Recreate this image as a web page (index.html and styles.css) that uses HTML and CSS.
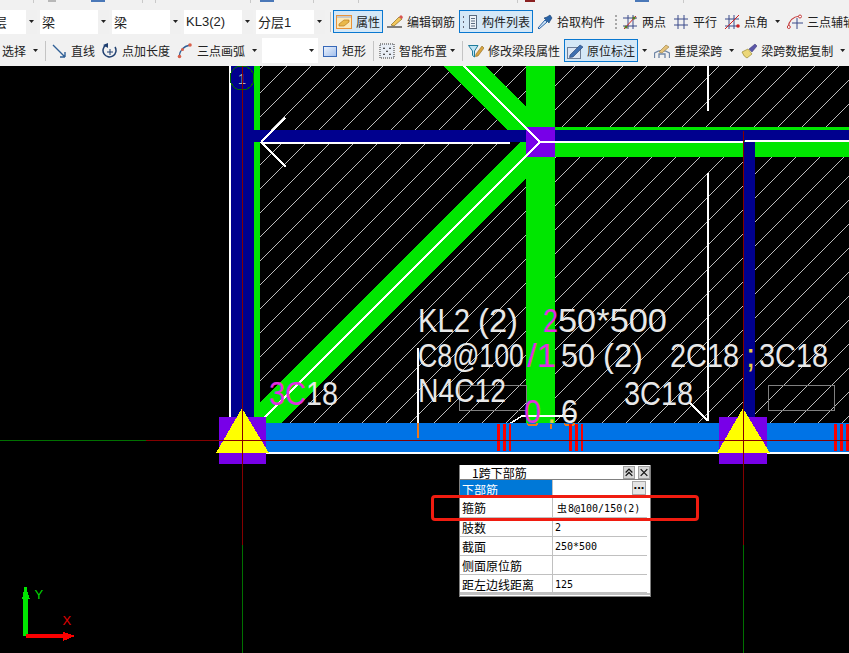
FILE: index.html
```html
<!DOCTYPE html>
<html lang="zh-CN">
<head>
<meta charset="utf-8">
<title>梁 原位标注</title>
<link rel="stylesheet" href="styles.css">
</head>
<body>
<div class="app">
  <header class="toolbar">
    <div class="row row-cut">
      <i class="bit sep-bit b33"></i><i class="bit gray-bit b14"></i><i class="bit blue-bit b35"></i><i class="bit sep-bit b37"></i><i class="bit sep-bit b12"></i><i class="bit sep-bit b94"></i><i class="bit blue-bit b9"></i><i class="bit sep-bit b39"></i><i class="bit sep-bit b44"></i><i class="bit sep-bit b158"></i><i class="bit red-bit b7"></i><i class="bit blue-bit b100"></i><i class="bit sep-bit b34"></i>
    </div>
    <div class="row row-a">
      <div class="combo combo-first"><span class="combo-text clip-left">层</span><span class="combo-arrow"><b class="caret"></b></span></div>
      <div class="combo"><span class="combo-text">梁</span><span class="combo-arrow"><b class="caret"></b></span></div>
      <div class="combo"><span class="combo-text">梁</span><span class="combo-arrow"><b class="caret"></b></span></div>
      <div class="combo"><span class="combo-text">KL3(2)</span><span class="combo-arrow"><b class="caret"></b></span></div>
      <div class="combo"><span class="combo-text">分层1</span><span class="combo-arrow"><b class="caret"></b></span></div>
      <span class="sep m2"></span>
      <div class="tool active m2">
        <svg class="ico" viewBox="0 0 16 16"><rect x="0.5" y="1.5" width="15" height="13" fill="#fde9b8" stroke="#e8923a"/><rect x="1" y="2" width="14" height="2" fill="#c9c9c9"/><path d="M3 10 L8 6 L13 6 L13 8 L8 12 L3 12 Z" fill="#e9b84a" stroke="#b97a1c" stroke-width="0.7"/></svg>
        <span>属性</span>
      </div>
      <div class="tool m4">
        <svg class="ico" viewBox="0 0 16 16"><path d="M0 13 H15" stroke="#333" stroke-width="1.2"/><path d="M4 11 L12 3 L15 5 L7 12 Z" fill="#f2c75c" stroke="#8a6a20" stroke-width="0.7"/><path d="M12 3 L14 1 L16 3 L15 5 Z" fill="#d9534f"/></svg>
        <span>编辑钢筋</span>
      </div>
      <div class="tool active m4">
        <svg class="ico" viewBox="0 0 16 16"><path d="M1 3 H3 M1 8 H3 M1 13 H3" stroke="#667" stroke-width="2" stroke-dasharray="1 1"/><rect x="7.5" y="1.5" width="7" height="13" fill="#eef3f8" stroke="#5a6b80"/><path d="M9 4.5 H13 M9 7 H13 M9 9.5 H13 M9 12 H13" stroke="#5a6b80"/></svg>
        <span>构件列表</span>
      </div>
      <div class="tool m4">
        <svg class="ico" viewBox="0 0 16 16"><path d="M2 15 L1 14 L8 6 L10 8 Z" fill="#cfe4f7" stroke="#2a64a8"/><path d="M7 4 L12 9 L13 7 L15 4 L13 1 L10 3 Z" fill="#2a64a8" stroke="#173c6b" stroke-width="0.6"/></svg>
        <span>拾取构件</span>
      </div>
      <span class="grip m10"></span>
      <div class="tool m5">
        <svg class="ico" viewBox="0 0 16 16"><path d="M1 4 H15 M1 12 H15 M6 1 V15 M11 1 V15" stroke="#3a4a8a"/><path d="M2 15 L14 2" stroke="#d02020"/><circle cx="4" cy="13" r="1.6" fill="#5a7a20"/><circle cx="12" cy="4" r="1.6" fill="#5a7a20"/></svg>
        <span>两点</span>
      </div>
      <div class="tool m7">
        <svg class="ico" viewBox="0 0 16 16"><path d="M1 5 H15 M1 11 H15 M5 1 V15 M11 1 V15" stroke="#3a4a8a"/></svg>
        <span>平行</span>
      </div>
      <div class="tool m7">
        <svg class="ico" viewBox="0 0 16 16"><path d="M1 5 H15 M1 12 H15 M5 1 V15 M10 1 V15" stroke="#3a4a8a"/><path d="M1 15 L15 1" stroke="#d02020"/><circle cx="14" cy="12" r="1.8" fill="#d02020"/></svg>
        <span>点角</span>
      </div>
      <b class="caret m7"></b>
      <div class="tool m7">
        <svg class="ico" viewBox="0 0 16 16"><path d="M1 14 Q2 3 13 2" fill="none" stroke="#c43c3c" stroke-width="1.2"/><path d="M5 9 H16 M10 4 V15" stroke="#3a4a8a"/><circle cx="13" cy="2.500" r="1.500" fill="#fff" stroke="#c43c3c"/><circle cx="1.800" cy="13" r="1.500" fill="#fff" stroke="#c43c3c"/></svg>
        <span>三点辅轴</span>
      </div>
    </div>
    <div class="row row-b">
      <span class="lead">选择</span>
      <b class="caret m7"></b>
      <span class="sep m7"></span>
      <div class="tool m5">
        <svg class="ico" viewBox="0 0 16 16"><path d="M2 2 L14 14 M14 14 V9 M14 14 H9" fill="none" stroke="#2f5f96" stroke-width="1.400"/></svg>
        <span>直线</span>
      </div>
      <div class="tool m7">
        <svg class="ico" viewBox="0 0 16 16"><path d="M4 2 A6.500 6.500 0 1 0 13 4" fill="none" stroke="#1f3f70" stroke-width="1.500"/><path d="M1 2 L6 0 L6 5 Z" fill="#1f3f70"/><path d="M8 6 V12 M5 9 H11" stroke="#1f3f70"/></svg>
        <span>点加长度</span>
      </div>
      <div class="tool m7">
        <svg class="ico" viewBox="0 0 16 16"><path d="M2 14 Q3 4 13 2" fill="none" stroke="#2f5f96" stroke-width="1.300"/><circle cx="2.500" cy="13.500" r="1.800" fill="#d9604a"/><circle cx="5.500" cy="6.500" r="1.500" fill="#d9604a"/><circle cx="13" cy="2" r="1.800" fill="#d9604a"/></svg>
        <span>三点画弧</span>
      </div>
      <b class="caret m7"></b>
      <div class="combo combo-blank m5"><span class="combo-text"></span><b class="caret"></b></div>
      <div class="tool m4">
        <svg class="ico" viewBox="0 0 16 16"><defs><linearGradient id="rectFill" x1="0" y1="0" x2="1" y2="1"><stop offset="0" stop-color="#eef4fd"/><stop offset="1" stop-color="#9fbdeb"/></linearGradient></defs><rect x="1.500" y="3.500" width="13" height="10" fill="url(#rectFill)" stroke="#3768b8"/></svg>
        <span>矩形</span>
      </div>
      <span class="sep m7"></span>
      <div class="tool m5">
        <svg class="ico" viewBox="0 0 16 16"><rect x="1" y="1" width="14" height="14" fill="#e8eef6" stroke="#333" stroke-dasharray="1 1"/><path d="M5 4 L6 6 L4 6 Z M11 4 L12 6 L10 6 Z M8 7 L9 9 L7 9 Z M5 10 L6 12 L4 12 Z M11 10 L12 12 L10 12 Z" fill="#222"/></svg>
        <span>智能布置</span>
      </div>
      <b class="caret m3"></b>
      <span class="sep m7"></span>
      <div class="tool m5">
        <svg class="ico" viewBox="0 0 16 16"><path d="M0.500 2.500 H10 L6.500 8 V14 L4.500 12.500 V8 Z" fill="#bfe3f2" stroke="#1f7c9c"/><path d="M8 11 L14 3 L16 5 L10 13 L7.500 13.500 Z" fill="#d9a441" stroke="#8a6a20" stroke-width="0.600"/></svg>
        <span>修改梁段属性</span>
      </div>
      <div class="tool active m4">
        <svg class="ico" viewBox="0 0 16 16"><rect x="0.500" y="4.500" width="13" height="11" fill="#dce6f3" stroke="#6f7f98"/><path d="M3 12 L13 2 L16 4 L6 14 L2.500 14.500 Z" fill="#3f6fb0" stroke="#233f70" stroke-width="0.600"/></svg>
        <span>原位标注</span>
      </div>
      <b class="caret m4"></b>
      <div class="tool m7">
        <svg class="ico" viewBox="0 0 16 16"><path d="M0.500 15 V10 Q8 5 15.500 10 V15 M5 15 V11 H11 V15" fill="none" stroke="#6f86a6" stroke-width="1.300"/><path d="M5 9 L12 2 L15 4 L8 10 Z" fill="#e5c27a" stroke="#96793a" stroke-width="0.600"/></svg>
        <span>重提梁跨</span>
      </div>
      <b class="caret m7"></b>
      <div class="tool m7">
        <svg class="ico" viewBox="0 0 16 16"><path d="M1 9 L7 6 L11 11 L6 15 Q3 14 1 9 Z" fill="#ecd778" stroke="#9a8a35" stroke-width="0.700"/><path d="M8 6 L14 1 L16 3 L11 9 Z" fill="#5a56a8" stroke="#36336e" stroke-width="0.500"/></svg>
        <span>梁跨数据复制</span>
      </div>
      <b class="caret m7"></b>
    </div>
  </header>

  <main class="canvas">
    <svg class="drawing" viewBox="0 66 849 587" width="849" height="587">
      <defs>
        <pattern id="hatch" patternUnits="userSpaceOnUse" x="0" y="0" width="24" height="24">
          <path d="M0 17 L17 0 M17 24 L24 17" stroke="#bcbcbc" stroke-width="1" fill="none"/>
        </pattern>
      </defs>

      <rect class="hatch" x="260" y="66" width="589" height="358"/>

      <rect class="c-green" x="254" y="66" width="6" height="358"/>
      <polygon class="c-green" points="444,66 485,66 526,107 526,132 507,130"/>
      <polygon class="c-green" points="526,136 520,142 260,402 254,402 254,423 281,423 526,178"/>
      <rect class="c-green" x="526" y="66" width="29" height="358"/>
      <rect class="c-green" x="555" y="127" width="294" height="30"/>

      <rect class="c-navy" x="231" y="66" width="23" height="352"/>
      <rect class="c-navy" x="254" y="130" width="272" height="12"/>
      <rect class="c-navy" x="555" y="130" width="294" height="11"/>
      <rect class="c-navy" x="743" y="142" width="12" height="276"/>
      <rect class="c-purple" x="526" y="127" width="29" height="30"/>
      <rect class="c-white" x="229" y="66" width="2" height="388"/>

      <circle class="axis-ring" cx="242" cy="78" r="12"/>
      <text class="axis-no" x="242" y="84">1</text>

      <g class="wire">
        <path d="M464 66 L540 142 L255 427"/>
        <path d="M261 142 L285 118 M261 142 L286 167"/>
        <path d="M690 403 L708 421"/>
        <path d="M506 426 L522 416 H575"/>
      </g>
      <g class="wire-thick">
        <path d="M261 142.500 H510"/>
        <path d="M540 141.500 H743 M745 140.500 H849"/>
        <path d="M708 66 V111 M708 173 V421"/>
        <path d="M418 348 V423"/>
      </g>

      <rect class="frame" x="459.500" y="385.500" width="67" height="25"/>
      <rect class="frame" x="768.500" y="385.500" width="66" height="25"/>

      <g class="cad">
        <text x="418" y="332" textLength="52" lengthAdjust="spacingAndGlyphs">KL2</text>
        <text x="478" y="332" textLength="40" lengthAdjust="spacingAndGlyphs">(2)</text>
        <text class="pink" x="543" y="332" textLength="15" lengthAdjust="spacingAndGlyphs">2</text>
        <text x="558" y="332" textLength="109" lengthAdjust="spacingAndGlyphs">50*500</text>

        <text x="418" y="367" textLength="106" lengthAdjust="spacingAndGlyphs">C8@100</text>
        <text class="pink" x="527" y="367" textLength="29" lengthAdjust="spacingAndGlyphs">/1</text>
        <text x="561" y="367" textLength="34" lengthAdjust="spacingAndGlyphs">50</text>
        <text x="603" y="367" textLength="40" lengthAdjust="spacingAndGlyphs">(2)</text>
        <text x="670" y="367" textLength="69" lengthAdjust="spacingAndGlyphs">2C18</text>
        <text class="gold" x="746" y="367">;</text>
        <text x="759" y="367" textLength="69" lengthAdjust="spacingAndGlyphs">3C18</text>

        <text x="418" y="402" textLength="88" lengthAdjust="spacingAndGlyphs">N4C12</text>

        <text class="pink" x="269" y="405" textLength="37" lengthAdjust="spacingAndGlyphs">3C</text>
        <text x="306" y="405" textLength="32" lengthAdjust="spacingAndGlyphs">18</text>
        <text x="624" y="405" textLength="69" lengthAdjust="spacingAndGlyphs">3C18</text>

        <text class="pink" x="524" y="423" textLength="17" lengthAdjust="spacingAndGlyphs">0</text>
        <text class="gold" x="547" y="423">,</text>
        <text x="561" y="423" textLength="17" lengthAdjust="spacingAndGlyphs">6</text>
      </g>

      <rect class="c-beam" x="231" y="423" width="618" height="29"/>
      <rect class="c-white" x="230" y="452" width="619" height="2"/>
      <rect class="c-orange" x="417" y="423" width="2" height="15"/>
      <path class="orange-arc" d="M527 424 Q532 427 538 424 M564 424 Q569 427 575 424 M551 424 V429"/>

      <g class="c-tick">
        <rect x="497" y="424" width="3" height="27"/><rect x="503" y="424" width="3" height="27"/><rect x="509" y="424" width="2" height="27"/>
        <rect x="569" y="424" width="3" height="27"/><rect x="575" y="424" width="3" height="27"/><rect x="581" y="424" width="2" height="27"/>
        <rect x="834" y="424" width="3" height="27"/><rect x="840" y="424" width="3" height="27"/><rect x="846" y="424" width="3" height="27"/>
      </g>

      <rect class="c-purple" x="219" y="417" width="47" height="47"/>
      <rect class="c-purple" x="719" y="417" width="48" height="47"/>
      <polygon class="c-yellow" points="242,408 269,453 216,453"/>
      <polygon class="c-yellow" points="743,408 770,453 717,453"/>

      <path class="line-red" d="M146 440.500 H849 M242.500 66 V545 M743.500 131 V545"/>
      <path class="line-green" d="M0 440.500 H146 M242.500 545 V653 M743.500 545 V653"/>

      <path class="arrow-y" d="M23 636 V599 H22 L24 590 V587 H27 V590 L30 599 H28 V636 Z"/>
      <path class="arrow-x" d="M26 634 H63 V632 L75 636 L63 641 V638 H26 Z"/>
      <text class="axis-y" x="34.500" y="599">Y</text>
      <text class="axis-x" x="62.500" y="625">X</text>
    </svg>

    <section class="panel">
      <div class="panel-title">
        <span class="panel-name">1跨下部筋</span>
        <button class="panel-btn" type="button"><svg viewBox="0 0 12 12" width="11" height="11"><path d="M2 6 L6 2 L10 6 M2 10 L6 6 L10 10" fill="none" stroke="#111" stroke-width="1.500"/></svg></button>
        <button class="panel-btn" type="button"><svg viewBox="0 0 12 12" width="11" height="11"><path d="M2 2 L10 10 M10 2 L2 10" fill="none" stroke="#111" stroke-width="1.500"/></svg></button>
      </div>
      <div class="grid">
        <div class="cell key selected">下部筋</div>
        <div class="cell val first"><span class="more">...</span></div>
        <div class="cell key">箍筋</div>
        <div class="cell val rebar"><span class="sym">虫</span>8@100/150(2)</div>
        <div class="cell key">肢数</div>
        <div class="cell val">2</div>
        <div class="cell key">截面</div>
        <div class="cell val">250*500</div>
        <div class="cell key">侧面原位筋</div>
        <div class="cell val"></div>
        <div class="cell key">距左边线距离</div>
        <div class="cell val">125</div>
      </div>
    </section>

    <div class="callout"></div>
  </main>
</div>
</body>
</html>
```
FILE: styles.css
```css
* { box-sizing: border-box; }
html, body { margin: 0; padding: 0; background: #000; }
body { font-family: "Noto Sans CJK SC", "Liberation Sans", sans-serif; font-size: 12px; }

.app { width: 849px; height: 653px; overflow: hidden; display: flex; flex-direction: column; }

/* toolbar */
.toolbar { height: 66px; flex: none; background: #f1f1f1; color: #222; }
.row { display: flex; align-items: center; white-space: nowrap; overflow: hidden; }
.row-cut { height: 9px; align-items: flex-start; }
.row-a { height: 25px; }
.row-b { height: 25px; margin-top: 4px; }

.bit { display: block; height: 2px; flex: none; }
.sep-bit { width: 1px; height: 3px; background: #c9c9c9; }
.gray-bit { width: 8px; background: #b8b8b8; }
.blue-bit { width: 14px; background: #4a78b8; }
.red-bit { width: 10px; background: #8a2020; }
.b33 { margin-left: 33px; } .b14 { margin-left: 14px; } .b35 { margin-left: 35px; }
.b37 { margin-left: 37px; } .b12 { margin-left: 12px; } .b94 { margin-left: 94px; }
.b9 { margin-left: 9px; } .b39 { margin-left: 39px; } .b44 { margin-left: 44px; }
.b158 { margin-left: 158px; } .b7 { margin-left: 7px; } .b100 { margin-left: 100px; }
.b34 { margin-left: 34px; }

.m2 { margin-left: 2px; } .m3 { margin-left: 3px; } .m4 { margin-left: 4px; }
.m5 { margin-left: 5px; } .m7 { margin-left: 7px; } .m10 { margin-left: 10px; }

.combo { width: 69px; height: 24px; flex: none; margin-right: 3px; background: #fff; display: flex; align-items: center; overflow: hidden; }
.combo-first { width: 37px; }
.combo-text { flex: 1; padding-left: 2px; font-size: 13px; font-family: "Liberation Sans", "Noto Sans CJK SC", sans-serif; color: #222; }
.clip-left { margin-left: -6px; padding-left: 0; }
.combo-arrow { width: 11px; height: 100%; background: #f0f0f0; display: flex; align-items: center; justify-content: center; }
.combo-blank { width: 56px; height: 25px; margin-right: 0; padding-right: 4px; }

.caret { display: block; flex: none; width: 5px; height: 3px; background: #222; clip-path: polygon(0 0, 100% 0, 50% 100%); }

.sep { display: block; flex: none; width: 1px; height: 20px; background: #c4c4c4; }
.grip { display: block; flex: none; width: 2px; height: 14px; background: repeating-linear-gradient(to bottom, #a8a8a8 0 2px, transparent 2px 4px); }
.lead { margin-left: 2px; }

.tool { display: flex; align-items: center; gap: 4px; flex: none; height: 23px; }
.tool.active { padding: 0 2px; border: 1px solid #0a78d0; background: #d5e8f7; }
.ico { width: 16px; height: 16px; flex: none; display: block; }

/* drawing */
.canvas { position: relative; flex: 1; background: #000; overflow: hidden; }
.drawing { display: block; shape-rendering: crispEdges; }

.hatch { fill: url(#hatch); }
.c-green { fill: #00e600; }
.c-navy { fill: #00008e; }
.c-purple { fill: #7800e8; }
.c-white { fill: #fff; }
.c-beam { fill: #0073e6; }
.c-orange { fill: #f07818; }
.c-tick { fill: #fa0000; }
.c-yellow { fill: #ffff00; }
.frame { fill: none; stroke: #808080; stroke-width: 1; }
.axis-ring { fill: none; stroke: #006c00; stroke-width: 1; }
.axis-no { fill: #b0b0b0; font-family: "Liberation Sans", sans-serif; font-size: 15px; text-anchor: middle; }
.wire path { fill: none; stroke: #fff; stroke-width: 1.5; }
.wire-thick path { fill: none; stroke: #fff; stroke-width: 2; }
.orange-arc { fill: none; stroke: #f07818; stroke-width: 2; }

.cad text { font-family: "Liberation Sans", sans-serif; font-size: 33px; fill: #e8e8e8; }
.cad .pink { fill: #e22ee2; }
.cad .gold { fill: #e8d040; }

.line-red { fill: none; stroke: #840000; stroke-width: 1; }
.line-green { fill: none; stroke: #007000; stroke-width: 1; }
.arrow-y { fill: #00e600; }
.arrow-x { fill: #fa0000; }
.axis-y { fill: #00d800; font-family: "Liberation Sans", sans-serif; font-size: 13px; }
.axis-x { fill: #e00000; font-family: "Liberation Sans", sans-serif; font-size: 13px; }

/* floating property panel */
.panel { position: absolute; left: 459px; top: 399px; width: 192px; height: 132px; background: #fff; border: 1px solid #808080; border-top: 0; color: #000; overflow: hidden; }
.panel-title { height: 15px; display: flex; align-items: center; justify-content: flex-end; gap: 3px; border-bottom: 1px solid #808080; position: relative; }
.panel-name { position: absolute; left: 12px; top: 0; font-size: 12px; line-height: 16px; }
.panel-btn { width: 12px; height: 13px; margin: 0; padding: 0; border: 1px solid #a0a0a0; background: #d6d6d6; display: flex; align-items: center; justify-content: center; }
.grid { display: grid; grid-template-columns: 93px 94px; grid-template-rows: 18px 20px 19px 19px 19px 18px; border-bottom: 2px solid #c0c0c0; border-right: 0; }
.cell { border-bottom: 1px solid #c0c0c0; padding-left: 2px; font-size: 12px; line-height: 19px; overflow: hidden; white-space: nowrap; }
.key { border-right: 1px solid #c0c0c0; }
.val { padding-left: 2px; font-family: "DejaVu Sans Mono", "Noto Sans CJK SC", monospace; font-size: 10px; }
.selected { background: #0078d7; color: #fff; border-bottom: 2px solid #3a9ae8; line-height: 20px; }
.first { display: flex; justify-content: flex-end; padding: 1px 1px 0 0; }
.more { width: 14px; height: 14px; background: #e4e4e4; border: 1px solid #a8a8a8; font-family: "Liberation Sans", sans-serif; font-size: 13px; font-weight: bold; line-height: 5px; text-align: center; }
.rebar { padding-left: 4px; }
.sym { font-family: "Noto Sans CJK SC", sans-serif; font-size: 10px; margin-right: 1px; }

.callout { position: absolute; left: 431px; top: 429px; width: 268px; height: 26px; border: 3px solid #f01c10; border-radius: 4px; }
```
